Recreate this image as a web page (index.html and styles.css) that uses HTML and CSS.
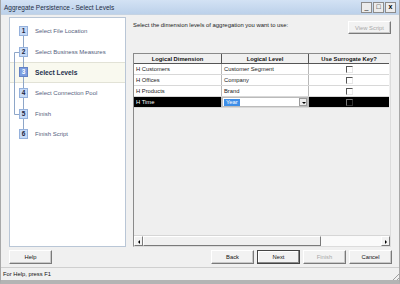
FILE: index.html
```html
<!DOCTYPE html>
<html>

<head>
	<link rel="stylesheet" href="styles.css">
</head>

<body>
	<div class="window">
		<div class="titlebar">
			<span class="title">Aggregate Persistence - Select Levels</span>
			<div class="controls">
				<span class="ctl">_</span>
				<span class="ctl">&#9633;</span>
				<span class="ctl bold">x</span>
			</div>
		</div>

		<div class="main">
			<div class="steps">
				<svg class="lines" width="115" height="130">
					<g stroke="#8ea6c8" stroke-width="1">
						<line x1="13.5" y1="18" x2="13.5" y2="29" />
						<line x1="13.5" y1="39" x2="13.5" y2="49" />
						<line x1="13.5" y1="59" x2="13.5" y2="70" />
						<line x1="13.5" y1="80" x2="13.5" y2="91" />
						<line x1="13.5" y1="101" x2="13.5" y2="111" />
						<polyline fill="none" points="9,34.5 4.5,34.5 4.5,96.5 9,96.5" />
					</g>
				</svg>
				<ul class="steplist">
					<li><span class="num">1</span>Select File Location</li>
					<li><span class="num">2</span>Select Business Measures</li>
					<li class="current"><span class="num">3</span>Select Levels</li>
					<li><span class="num">4</span>Select Connection Pool</li>
					<li><span class="num">5</span>Finish</li>
					<li><span class="num">6</span>Finish Script</li>
				</ul>
			</div>

			<div class="content">
				<div class="top">
					<span class="hint">Select the dimension levels of aggregation you want to use:</span>
					<button class="btn disabled">View Script</button>
				</div>
				<div class="grid">
					<table>
						<tr>
							<th class="c1">Logical Dimension</th>
							<th class="c2">Logical Level</th>
							<th class="c3">Use Surrogate Key?</th>
						</tr>
						<tr>
							<td>H Customers</td>
							<td>Customer Segment</td>
							<td class="chk"><span class="box"></span></td>
						</tr>
						<tr>
							<td>H Offices</td>
							<td>Company</td>
							<td class="chk"><span class="box"></span></td>
						</tr>
						<tr>
							<td>H Products</td>
							<td>Brand</td>
							<td class="chk"><span class="box"></span></td>
						</tr>
						<tr class="sel">
							<td>H Time</td>
							<td class="combo">
								<div class="dropdown"><span class="picked">Year</span><span class="arrow"></span></div>
							</td>
							<td class="chk"><span class="box"></span></td>
						</tr>
					</table>
					<div class="scrollbar">
						<span class="sbtn left"></span>
						<span class="thumb"></span>
						<span class="track"></span>
						<span class="sbtn right"></span>
					</div>
				</div>
			</div>
		</div>

		<div class="buttons">
			<button class="btn">Help</button>
			<div class="spacer"></div>
			<button class="btn">Back</button>
			<button class="btn default">Next</button>
			<button class="btn disabled">Finish</button>
			<button class="btn">Cancel</button>
		</div>

		<div class="status">
			<span>For Help, press F1</span>
			<span class="grip"></span>
		</div>
	</div>
</body>

</html>
```

FILE: styles.css
```css
body {
	margin: 0;
	font-family: "Liberation Sans", Arial, sans-serif;
}

.window {
	width: 400px;
	height: 284px;
	box-sizing: border-box;
	background-color: #f0f0f0;
	border-left: 1px solid #a8a8a8;
	border-right: 1px solid #a8a8a8;
	border-bottom: 4px solid #b4b4b4;
	display: flex;
	flex-direction: column;
}

.titlebar {
	height: 15px;
	background: linear-gradient(to bottom, #d3e2f4, #bcd1ea);
	border-bottom: 1px solid #c5d3e3;
	box-sizing: border-box;
	display: flex;
	align-items: center;
	padding-left: 3px;
}

.title {
	font-size: 6.5px;
	color: #1e2d45;
	flex: 1;
}

.controls {
	display: flex;
	gap: 1px;
	margin-right: 3px;
}

.ctl {
	width: 9px;
	height: 9px;
	background-color: #ececec;
	border: 1px solid #8c8c8c;
	font-size: 7px;
	line-height: 8px;
	text-align: center;
	color: #000;
}

.ctl.bold {
	font-weight: bold;
}

.main {
	display: flex;
	gap: 7px;
	padding: 0 7px 0 8px;
	margin-top: 2px;
	height: 230px;
}

.steps {
	position: relative;
	width: 117px;
	box-sizing: border-box;
	background-color: #fff;
	border: 1px solid #b9c6d6;
}

.lines {
	position: absolute;
	top: 0;
	left: 0;
}

.steplist {
	list-style: none;
	margin: 0;
	padding: 3px 0 0 0;
}

.steplist li {
	height: 20.6px;
	box-sizing: border-box;
	display: flex;
	align-items: center;
	padding-left: 9px;
	font-size: 6px;
	color: #55627e;
}

.num {
	position: relative;
	width: 9px;
	height: 10px;
	box-sizing: border-box;
	background-color: #c6daf7;
	border: 1px solid #95b1dc;
	font-size: 6.5px;
	font-weight: bold;
	color: #1a2440;
	text-align: center;
	line-height: 8px;
	margin-right: 7px;
}

.steplist li.current {
	background-color: #f9f9ef;
	border-top: 1px solid #e2e2d6;
	border-bottom: 1px solid #e2e2d6;
	font-size: 6.7px;
	font-weight: bold;
	color: #23304c;
}

.current .num {
	background-color: #7c9ee0;
	border-color: #6583c4;
	color: #fff;
}

.content {
	width: 258px;
	display: flex;
	flex-direction: column;
}

.top {
	height: 36px;
	display: flex;
	justify-content: space-between;
	align-items: flex-start;
}

.hint {
	font-size: 5.9px;
	color: #222;
	margin-top: 5px;
}

.btn {
	width: 43px;
	height: 14px;
	padding: 0;
	font-family: "Liberation Sans", Arial, sans-serif;
	font-size: 5.8px;
	color: #111;
	background-color: #f2f2f2;
	border: 1px solid;
	border-color: #fff #7a7a7a #7a7a7a #fff;
	box-shadow: inset -1px -1px 0 #c8c8c8;
}

.top .btn {
	margin-top: 4px;
	height: 13px;
}

.btn.disabled {
	color: #a8a8a8;
}

.btn.default {
	border-color: #444;
	box-shadow: inset -1px -1px 0 #8a8a8a, inset 1px 1px 0 #fff;
}

.grid {
	flex: 1;
	position: relative;
	box-sizing: border-box;
	border: 1px solid #8a8a8a;
	border-right-color: #dcdcdc;
	border-bottom-color: #dcdcdc;
	background-color: #efefef;
	display: flex;
	flex-direction: column;
}

table {
	border-collapse: collapse;
	font-size: 5.8px;
	table-layout: fixed;
	width: 255px;
}

th {
	height: 9px;
	padding: 0;
	font-weight: bold;
	text-align: center;
	background-color: #f0f0f0;
	border-right: 1px solid #555;
	border-bottom: 1px solid #555;
	color: #111;
}

th.c1 {
	width: 87px;
}

th.c2 {
	width: 86px;
}

th.c3 {
	border-right: none;
}

td {
	height: 10px;
	padding: 0 0 0 2px;
	background-color: #fff;
	border-right: 1px solid #b8b8b8;
	border-bottom: 1px solid #d8d8d8;
	color: #222;
	white-space: nowrap;
}

td.chk {
	text-align: center;
	border-right: none;
	padding: 0;
}

.box {
	display: inline-block;
	width: 7px;
	height: 7px;
	box-sizing: border-box;
	border-top: 1px solid #555;
	border-left: 1px solid #555;
	border-right: 1px solid #e6e6e6;
	border-bottom: 1px solid #e6e6e6;
	vertical-align: middle;
	margin-left: 0;
}

tr.sel td {
	background-color: #000;
	color: #fff;
}

tr.sel td.combo {
	background-color: #fff;
	padding: 0;
}

.dropdown {
	display: flex;
	align-items: center;
	height: 10px;
	border: 1px solid #bbb;
	box-sizing: border-box;
}

.picked {
	background-color: #3d8ee8;
	color: #fff;
	padding: 0 2px;
	margin-left: 1px;
	line-height: 7px;
	flex: none;
}

.arrow {
	margin-left: auto;
	width: 8px;
	height: 8px;
	box-sizing: border-box;
	background-color: #ececec;
	border: 1px solid #9a9a9a;
	position: relative;
}

.arrow::after {
	content: "";
	position: absolute;
	left: 1.5px;
	top: 2.5px;
	border-left: 2px solid transparent;
	border-right: 2px solid transparent;
	border-top: 2px solid #000;
}

tr.sel td.chk .box {
	border-top-color: #777;
	border-left-color: #777;
	border-right-color: #333;
	border-bottom-color: #333;
}

.scrollbar {
	margin-top: auto;
	height: 10px;
	display: flex;
	background-color: #f6f6f6;
	border-top: 1px solid #d6d6d6;
}

.sbtn {
	width: 9px;
	box-sizing: border-box;
	background-color: #f2f2f2;
	border: 1px solid;
	border-color: #fff #7a7a7a #7a7a7a #fff;
	position: relative;
}

.sbtn::after {
	content: "";
	position: absolute;
	top: 2.5px;
	border-top: 2px solid transparent;
	border-bottom: 2px solid transparent;
}

.sbtn.left::after {
	left: 2.5px;
	border-right: 2px solid #000;
}

.sbtn.right::after {
	left: 3px;
	border-left: 2px solid #000;
}

.thumb {
	width: 178px;
	box-sizing: border-box;
	background-color: #f0f0f0;
	border: 1px solid;
	border-color: #fff #7a7a7a #7a7a7a #fff;
}

.track {
	flex: 1;
	background-color: #fafafa;
}

.buttons {
	display: flex;
	gap: 3px;
	padding: 0 7px 0 8px;
	margin-top: 3px;
}

.spacer {
	flex: 1;
}

.status {
	margin-top: 3px;
	height: 12px;
	border-top: 1px solid #cfcfcf;
	display: flex;
	align-items: center;
	justify-content: space-between;
	padding-left: 2px;
	font-size: 5.8px;
	color: #111;
}

.grip {
	width: 9px;
	height: 9px;
	align-self: flex-end;
	background: repeating-linear-gradient(135deg, transparent 0 2px, #a0a0a0 2px 3px);
	clip-path: polygon(100% 0, 100% 100%, 0 100%);
}
```
